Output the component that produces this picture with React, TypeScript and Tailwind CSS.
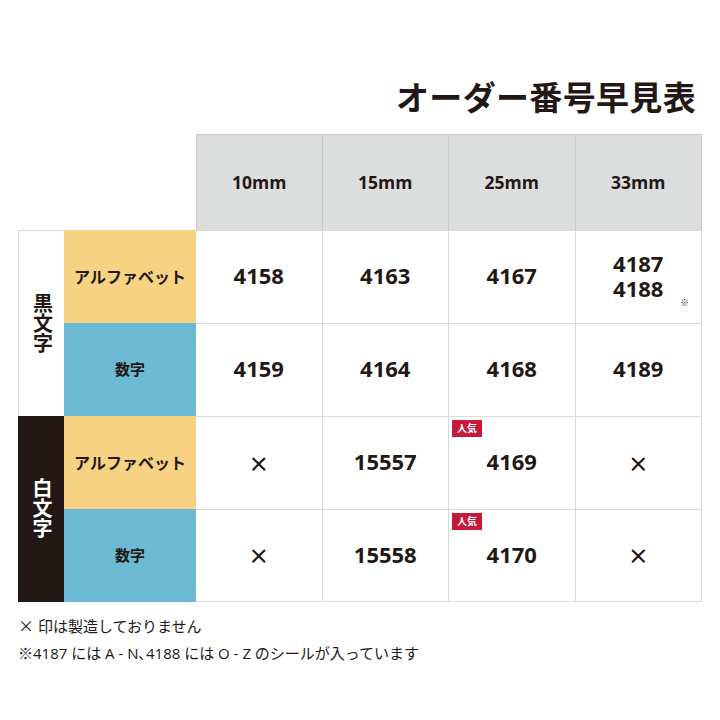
import type { ReactNode } from 'react';

// オーダー番号早見表: size columns × (文字色, 文字種) rows. Grid, not <table>, so the
// category cells can span two rows without rowSpan fiddling.
const SIZES = ['10mm', '15mm', '25mm', '33mm'];

type Cell = { v: string[] | null; hot?: boolean; note?: boolean };

const ROWS: { kind: 'alpha' | 'num'; cells: Cell[] }[] = [
  { kind: 'alpha', cells: [{ v: ['4158'] }, { v: ['4163'] }, { v: ['4167'] }, { v: ['4187', '4188'], note: true }] },
  { kind: 'num', cells: [{ v: ['4159'] }, { v: ['4164'] }, { v: ['4168'] }, { v: ['4189'] }] },
  { kind: 'alpha', cells: [{ v: null }, { v: ['15557'] }, { v: ['4169'], hot: true }, { v: null }] },
  { kind: 'num', cells: [{ v: null }, { v: ['15558'] }, { v: ['4170'], hot: true }, { v: null }] },
];

const font = "font-['Open_Sans','Noto_Sans_CJK_JP',sans-serif]";
const cjk = "font-['Noto_Sans_CJK_JP',sans-serif]";

export default function App() {
  return (
    <div className={`w-[720px] h-[720px] bg-white text-[#231815] ${font}`}>
      <div className="pt-[74px] pr-[24px] flex justify-end">
        <h1 className="text-[33px] leading-[48px] font-bold tracking-[0.01em]">オーダー番号早見表</h1>
      </div>

      <div className="mt-[12px] ml-[18px] w-[684px] grid grid-cols-[46px_132px_repeat(4,1fr)] grid-rows-[96px_repeat(4,93px)]">
        <div className="col-span-2" />
        {SIZES.map((s, i) => (
          <div
            key={s}
            className={`bg-[#dcdddd] border-t border-r border-[#c9caca] flex items-center justify-center text-[17.5px] font-bold ${
              i === 0 ? 'border-l' : ''
            }`}
          >
            {s}
          </div>
        ))}

        <Category dark={false} row="row-start-2 row-span-2">黒文字</Category>
        <Category dark row="row-start-4 row-span-2">白文字</Category>

        {ROWS.map((r, ri) => (
          <Row key={ri} kind={r.kind} cells={r.cells} start={ri + 2} />
        ))}
      </div>

      <div className="mt-[10px] ml-[18px] text-[15px] leading-[27px]">
        <p>
          <span className={`${cjk} text-[16px]`}>×</span> 印は製造しておりません
        </p>
        <p>※4187 には A - N､4188 には O - Z のシールが入っています</p>
      </div>
    </div>
  );
}

function Category({ dark, row, children }: { dark: boolean; row: string; children: ReactNode }) {
  return (
    <div
      className={`col-start-1 ${row} flex items-center justify-center ${
        dark ? 'bg-[#231815] text-white' : 'bg-white border-l border-t border-[#d9d9d9]'
      }`}
    >
      <span className="[writing-mode:vertical-rl] text-[20px] font-bold leading-none tracking-[0.02em]">{children}</span>
    </div>
  );
}

function Row({ kind, cells, start }: { kind: 'alpha' | 'num'; cells: Cell[]; start: number }) {
  const rowCls = ['row-start-2', 'row-start-3', 'row-start-4', 'row-start-5'][start - 2];
  return (
    <>
      <div
        className={`col-start-2 ${rowCls} flex items-center justify-center font-bold ${
          kind === 'alpha' ? 'bg-[#f7d283] text-[16px]' : 'bg-[#6cb9d3] text-[15px]'
        }`}
      >
        {kind === 'alpha' ? 'アルファベット' : '数字'}
      </div>
      {cells.map((c, i) => (
        <div
          key={i}
          className={`${rowCls} relative border-t border-r border-[#d9d9d9] flex flex-col items-center justify-center ${
            start === 5 ? 'border-b' : ''
          }`}
        >
          {c.hot && (
            <span className="absolute left-[3px] top-[3px] bg-[#c8193c] text-white text-[10px] font-bold leading-[17px] px-[5px]">
              人気
            </span>
          )}
          {c.v ? (
            <span className="text-[22px] font-bold leading-[25px] text-center -mt-[3px]">
              {c.v.map((n, k) => (
                <span key={n}>
                  {k > 0 && <br />}
                  {n}
                </span>
              ))}
            </span>
          ) : (
            <span className={`${cjk} text-[21px] font-bold leading-none`}>×</span>
          )}
          {c.note && <span className="absolute right-[12px] bottom-[16px] text-[9px] leading-none">※</span>}
        </div>
      ))}
    </>
  );
}
